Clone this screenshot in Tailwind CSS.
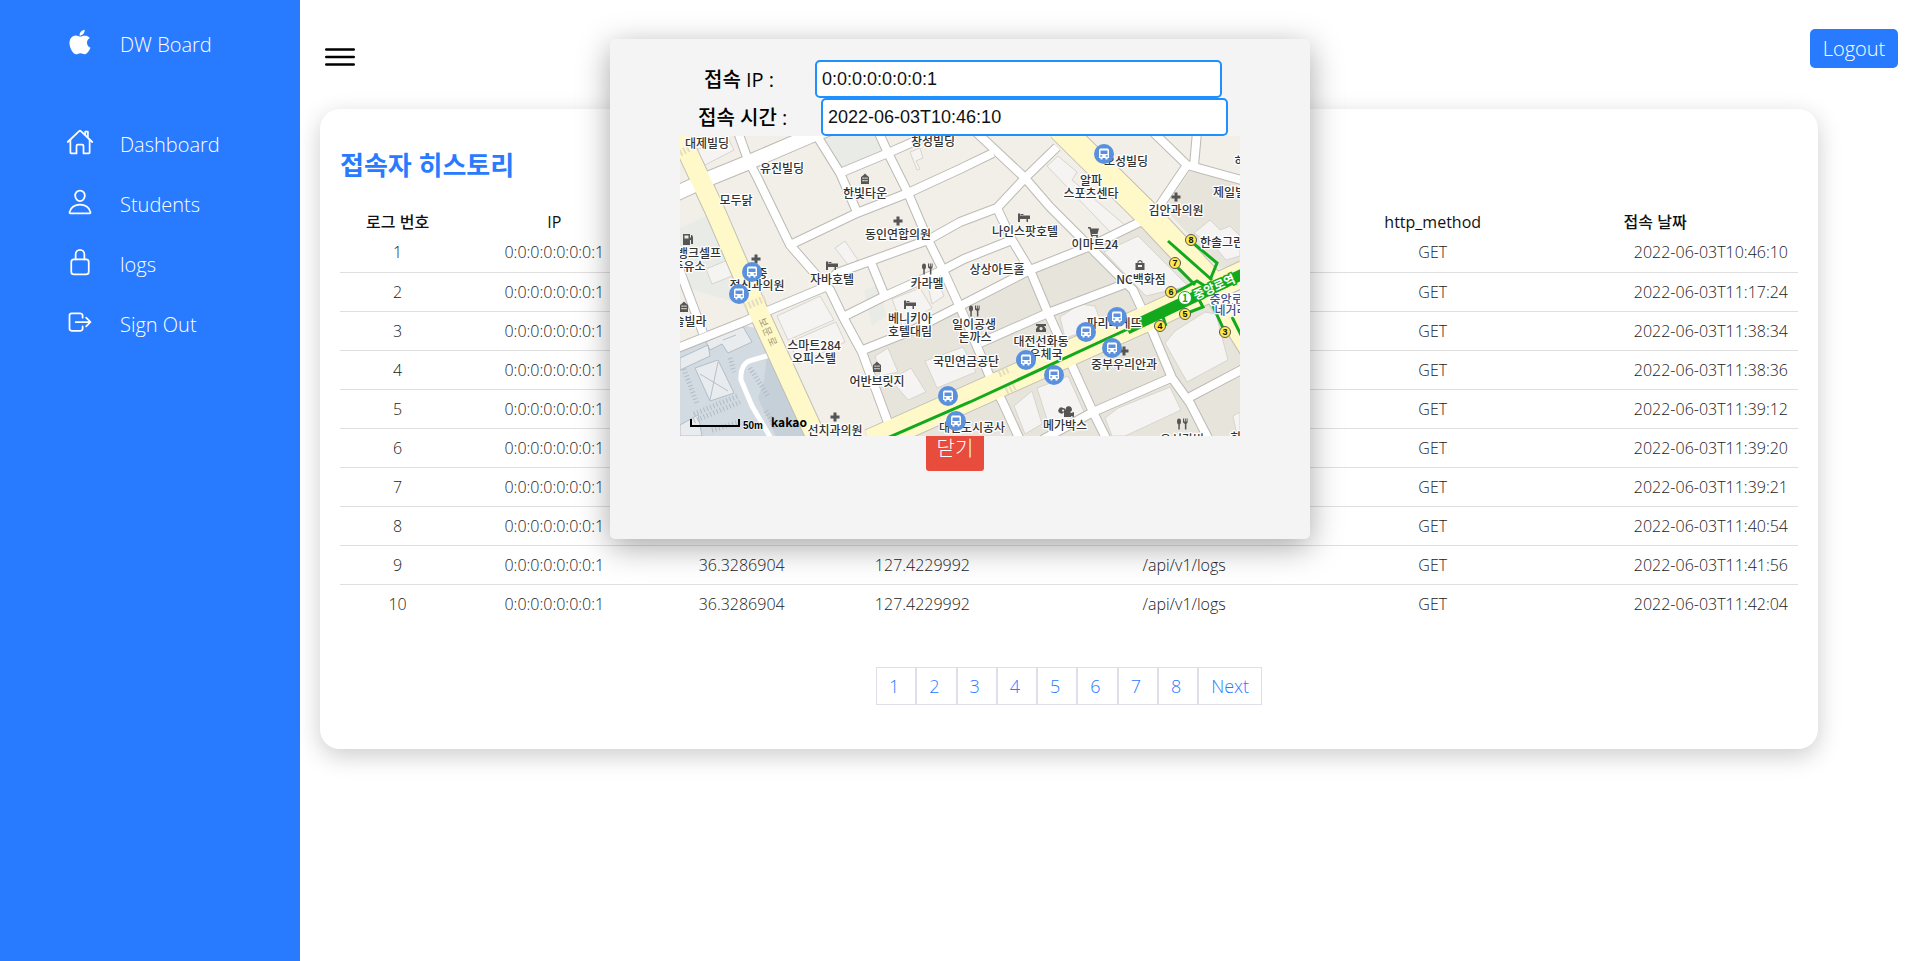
<!DOCTYPE html>
<html lang="ko">
<head>
<meta charset="utf-8">
<title>DW Board</title>
<script src="https://cdn.jsdelivr.net/npm/@tailwindcss/browser@4"></script>
</head>
<body class="min-h-screen bg-white font-['Open_Sans','Noto_Sans_CJK_KR',sans-serif] text-[#222]">
<div class="flex min-h-screen">
  <nav class="w-[300px] shrink-0 bg-[#287bff] pt-3 text-xl font-light text-white">
    <a href="#" class="mb-10 flex h-15 items-center gap-[26px] pl-[66px]">
      <svg class="size-7" viewBox="0 0 512 512" fill="currentColor"><path d="M349.13 136.86c-40.32 0-57.36 19.24-85.44 19.24-28.79 0-50.75-19.1-85.69-19.1-34.2 0-70.67 20.88-93.83 56.45-32.52 50.16-27 144.63 25.67 225.11 18.84 28.81 44 61.12 77 61.47h.6c28.68 0 37.2-18.78 76.67-19h.6c38.88 0 46.68 18.89 75.24 18.89h.6c33-.35 59.51-36.15 78.35-64.85 13.56-20.64 18.6-31 29-54.35-76.19-28.92-88.43-136.93-13.08-178.34-23-28.8-55.32-45.48-85.79-45.48z"/><path d="M340.25 32c-24 1.63-52 16.91-68.4 36.86-14.88 18.08-27.12 44.9-22.32 70.91h1.92c25.56 0 51.72-15.39 67-35.11 14.72-18.77 25.88-45.37 21.8-72.66z"/></svg>
      <span class="pt-1.5">DW Board</span>
    </a>
    <ul>
      <li><a href="#" class="flex h-15 items-center gap-[26px] pl-[66px]">
        <svg class="size-7" viewBox="0 0 512 512" fill="none" stroke="currentColor" stroke-width="32" stroke-linecap="round" stroke-linejoin="round"><path d="M80 212v236a16 16 0 0016 16h96V328a24 24 0 0124-24h80a24 24 0 0124 24v136h96a16 16 0 0016-16V212"/><path d="M480 256L266.89 52c-5-5.28-16.69-5.34-21.78 0L32 256M400 179V64h-48v69"/></svg>
        <span class="pt-1.5">Dashboard</span></a></li>
      <li><a href="#" class="flex h-15 items-center gap-[26px] pl-[66px]">
        <svg class="size-7" viewBox="0 0 512 512" fill="none" stroke="currentColor" stroke-width="32" stroke-linecap="round" stroke-linejoin="round"><path d="M344 144c-3.92 52.87-44 96-88 96s-84.15-43.12-88-96c-4-55 35-96 88-96s92 42 88 96z"/><path d="M256 304c-87 0-175.3 48-191.64 138.6C62.39 453.52 68.57 464 80 464h352c11.44 0 17.62-10.48 15.65-21.4C431.3 352 343 304 256 304z"/></svg>
        <span class="pt-1.5">Students</span></a></li>
      <li><a href="#" class="flex h-15 items-center gap-[26px] pl-[66px]">
        <svg class="size-7" viewBox="0 0 512 512" fill="none" stroke="currentColor" stroke-width="32" stroke-linecap="round" stroke-linejoin="round"><path d="M336 208v-95a80 80 0 00-160 0v95"/><rect x="96" y="208" width="320" height="272" rx="48"/></svg>
        <span class="pt-1.5">logs</span></a></li>
      <li><a href="#" class="flex h-15 items-center gap-[26px] pl-[66px]">
        <svg class="size-7" viewBox="0 0 512 512" fill="none" stroke="currentColor" stroke-width="32" stroke-linecap="round" stroke-linejoin="round"><path d="M304 336v40a40 40 0 01-40 40H104a40 40 0 01-40-40V136a40 40 0 0140-40h152c22.09 0 48 17.91 48 40v40M368 336l80-80-80-80M176 256h256"/></svg>
        <span class="pt-1.5">Sign Out</span></a></li>
    </ul>
  </nav>

  <main class="min-w-0 flex-1">
    <header class="flex h-[109px] items-start justify-between pl-5 pr-[22px] pt-[29px]">
      <button type="button" aria-label="메뉴" class="mt-2 text-black">
        <svg class="size-10" viewBox="0 0 512 512" fill="none" stroke="currentColor" stroke-width="32" stroke-linecap="round"><path d="M80 160h352M80 256h352M80 352h352"/></svg>
      </button>
      <a href="#" class="flex h-[39px] w-[88px] items-center justify-center rounded-[5px] bg-[#287bff] text-xl font-light text-white">Logout</a>
    </header>

    <section class="ml-5 mr-[102px] rounded-[20px] bg-white px-5 pb-11 pt-[37px] shadow-[0_7px_25px_rgba(0,0,0,0.2)]">
      <h2 class="text-[26px] leading-[38px] font-bold text-[#287bff]">접속자 히스토리</h2>
      <table class="mt-[22px] w-full table-fixed text-center text-base">
        <colgroup><col class="w-[7.9%]"><col class="w-[13.6%]"><col class="w-[12.1%]"><col class="w-[12.7%]"><col class="w-[23.2%]"><col class="w-[10.9%]"><col class="w-[19.6%]"></colgroup>
        <thead><tr class="h-[27px] align-bottom leading-[22px] text-[#111]"><th class="font-medium">로그 번호</th><th class="font-medium">IP</th><th class="font-medium">위도</th><th class="font-medium">경도</th><th class="font-medium">url</th><th class="font-medium">http_method</th><th class="font-medium">접속 날짜</th></tr></thead>
        <tbody id="logs" class="font-light"></tbody>
      </table>
      <nav aria-label="페이지" class="mt-11 flex justify-center text-lg font-light text-[#287bff]" id="pages"></nav>
    </section>
  </main>
</div>

<div role="dialog" aria-label="접속 위치" class="absolute left-1/2 top-[39px] flex h-[500px] w-[700px] -translate-x-1/2 flex-col items-center rounded-[5px] bg-[#f4f4f4] pt-[21px] shadow-[0_8px_32px_rgba(0,0,0,0.35)]">
  <div class="flex pl-1.5 text-xl text-black">
    <label for="ip" class="w-[111px] pt-1.5 font-medium">접속 IP :</label>
    <input id="ip" value="0:0:0:0:0:0:0:1" class="h-[38px] w-[407px] rounded-[5px] border-2 border-[#1e90ff] bg-white px-[5px] font-['Liberation_Sans',sans-serif] text-lg text-[#111] outline-none">
  </div>
  <div class="flex pl-1.5 text-xl text-black">
    <label for="time" class="w-[123px] pt-1.5 font-medium">접속 시간 :</label>
    <input id="time" value="2022-06-03T10:46:10" class="h-[38px] w-[407px] rounded-[5px] border-2 border-[#1e90ff] bg-white px-[5px] font-['Liberation_Sans',sans-serif] text-lg text-[#111] outline-none">
  </div>
  <svg class="relative z-10 block h-[300px] w-[560px] font-['Noto_Sans_CJK_KR',sans-serif]" viewBox="0 0 560 300" role="img" aria-label="지도">
    <defs>
      <g id="bus"><circle r="10" fill="#5b90dd"/><path fill="#fff" fill-rule="evenodd" d="M-4-5.500h8l1 1.500v8h-1.500v1.500h-2v-1.500h-3v1.500h-2v-1.500H-5v-8zM-3.500-3.500v3.500h7v-3.500zM-3.800 1.300v1.500h2v-1.500zM1.800 1.300v1.500h2v-1.500z"/></g>
      <path id="cross" fill="#555" d="M-1.500-4.500h3v3h3v3h-3v3h-3v-3h-3v-3h3z"/>
      <path id="bed" fill="#555" d="M-6-4.500h2v2l10 0v3.500h-2v3h-1.500v-3h-6.500v3h-2zM-3.500-4h3v1h-3z"/>
      <g id="fork" fill="#555"><ellipse cx="-3" cy="-2.500" rx="2" ry="3"/><path d="M-3.700 0h1.500v5.500h-1.500zM1-5.500h1v3h.8v-3h1v3h.8v-3h1v4l-1.200 1.500v5.500h-1.500v-5.500L1-1.500z"/></g>
      <path id="tower" fill="#555" fill-rule="evenodd" d="M-4 5v-7l2-1.500L0-5.500l2 2L4-2v7zM-2.600-1.500v1.300h1.400v-1.300zM-.6-1.500v1.300h1.300v-1.300zM1.300-1.500v1.300h1.300v-1.300zM-2.600 1v1.300h1.400V1zM-.6 1v1.300h1.300V1zM1.300 1v1.300h1.300V1z"/>
      <g id="roads" fill="none" stroke-linejoin="round">
        <path d="M58-4L68 24 77 41 110 109 138 141 150 154 163 181 182 216 210 292"/>
        <path d="M137 0L160 37 177 76M198-5L208 17 228 57 248 104 263 134 278 167 287 187 310 241 323 267 340 304"/>
        <path d="M160 37L208 17 256-4M110 109L177 77 228 57 280 33 313 17"/>
        <path d="M143 151L157 137 193 124 248 104 280 86 317 72 345 42 377 11M-5 213L63 186 90 174 150 149"/>
        <path d="M190 124L204 158M163 181L203 161 263 134 284 123 332 104M317 72L332 104 350 134 368 177 393 232 413 276 427 304"/>
        <path d="M296-4L345 42 370 71 413 114 453 154 473 197 492 242 510 267 529 304"/>
        <path d="M183 214L233 194 280 170 350 134 413 109 460 86M300 207L368 177 450 146"/>
        <path d="M473-4L507 29 565 45M517-4L514 30M507 29L480 69M510 261L565 232M362 304L413 276 493 241"/>
        <path d="M-2 130L23 197"/>
      </g>
      <path id="main" fill="none" stroke-linejoin="round" d="M-5 58L30 42 67 27 130 0 160-12"/>
      <g id="avenue" fill="none"><path stroke-linecap="butt" d="M380-8L466 77 530 145 580 225M190 306L280 266 470 181 565 137"/></g>
    </defs>
    <rect width="560" height="300" fill="#f2efe9"/>
    <path fill="#e7e4dc" d="M183 216L280 172 350 136 457 88 560 190V300H210zM510 35L560 48V130L540 132 484 72z"/>
    <path fill="#e9ebe7" d="M142 0H198L207 15 162 35zM0 92L30 78 68 170 0 150zM184 154L200 148 206 180 192 190z"/>
    <path fill="#d2dae2" d="M0 216L66 190 76 192 126 300H0z"/>
    <path fill="#c6d0d8" d="M87 219L97 228 126 300H96L78 262 84 245z"/>
    <g fill="#f5f4f2" stroke="#d8d5cf" stroke-width="1">
      <path d="M97 180L140 160 154 184 108 204zM110 206L156 186 165 206 118 228z"/>
      <path d="M155 112L165 105 178 124 168 129zM230 16L240 12 243 22 236 25 240 33 237 34z"/>
      <path d="M16 14L48 2 54 14 25 29zM26 133L48 124 52 140 32 148z"/>
      <path d="M367 30L378 20 397 36 392 44 446 90 433 99z"/>
      <path d="M424 116L458 100 508 150 466 160z"/>
      <path d="M211 244L231 232 246 256 228 264zM245 225L283 211 296 236 257 252zM195 220L208 212 218 236 200 240z"/>
      <path d="M212 163L240 152 252 172 222 190zM246 140L256 140 264 160 252 168z"/>
      <path d="M380 181L400 168 415 170 422 190 385 202zM334 270L352 255 362 288 345 298z"/>
      <path d="M357 252L388 240 405 278 370 293zM425 282L438 272 490 251 501 274 445 300H432z"/>
      <path d="M485 207L495 195 525 176 536 178 548 224 507 246zM553 280L560 276V295H556z"/>
      <path d="M514 97L530 84 540 94 550 90 560 100V120L546 124 536 112z"/>
    </g>
    <g fill="#e8ecef" stroke="#aab4bd" stroke-width=".8">
      <path d="M26 206L62 189 72 206 48 217 42 208 30 214zM0 222L28 209 30 220 0 234zM15 232L38 224 54 257 30 265zM0 289L18 279 22 300H0z"/>
      <path fill="none" d="M43 204L56 199M20 238L48 255M38 226L30 264"/>
    </g>
    <g fill="none" stroke="#b2bac3" stroke-width="5" stroke-dasharray="1 2.500">
      <path d="M4 233L17 268M14 285L60 266M14 278L58 260M70 232L88 260M50 222L54 236M86 275L96 292M32 294L60 286"/>
    </g>
    <path fill="none" stroke="#fff" stroke-width="5" d="M90 219L69 225Q60 229 61 244L72 270 92 304"/>
    <use href="#roads" stroke="#bdbab5" stroke-width="10"/>
    <use href="#main" stroke="#bdbab5" stroke-width="16"/>
    <path fill="none" stroke="#c2bfb4" stroke-width="21" d="M-5-11L36 77 79 177 140 310"/>
    <use href="#avenue" stroke="#c2bfb4" stroke-width="27"/>
    <use href="#roads" stroke="#fff" stroke-width="8"/>
    <use href="#main" stroke="#fff" stroke-width="14"/>
    <path fill="none" stroke="#fff9c9" stroke-width="19" d="M-5-11L36 77 79 177 140 310"/>
    <use href="#avenue" stroke="#fff9c9" stroke-width="25"/>
    <g fill="none" stroke="#e4dec0" stroke-width="7" stroke-dasharray="2 2"><path d="M65 171L86 162M0 17L14 10M319 238L330 233M326 255L336 250"/></g>

    <g fill="none" stroke="#12a91c" stroke-width="3">
      <path d="M205 303L290 266 450 192"/>
      <path stroke-width="11" d="M447 193L565 137"/>
      <path d="M488 105L532 144M513 107L537 127 530 144M497 131L515 149M495 157L517 145 525 150M510 176L523 171 517 160M486 190L482 178M543 192L533 170M562 201L552 181"/>
    </g>
    <g fill="#555">
      <use href="#tower" x="185" y="43"/><use href="#tower" x="4" y="171"/><use href="#tower" x="197" y="231"/>
      <use href="#cross" x="218" y="85"/><use href="#cross" x="76" y="123"/><use href="#cross" x="496" y="61"/><use href="#cross" x="155" y="281"/><use href="#cross" x="444" y="215"/>
      <use href="#bed" x="152" y="130"/><use href="#bed" x="344" y="82"/><use href="#bed" x="230" y="169"/>
      <use href="#fork" x="247" y="133"/><use href="#fork" x="294" y="175"/><use href="#fork" x="502" y="288"/>
      <path fill-rule="evenodd" d="M3 109V98h7v4l1-1v-2h1l1 2v7h-2v-4h-1v5zM4.500 99.500v3h4v-3z"/>
      <path d="M408 91h2.500l.6 1.500H419l-1.500 5.500h-5.500l.3 1H418v1h-7l-1.500-7.500H408z"/><circle cx="412" cy="101" r="1"/><circle cx="417" cy="101" r="1"/>
      <path fill-rule="evenodd" d="M455.500 134v-7h2v-1.500q2.500-3 5 0v1.500h2v7zM458.500 127h3v-1q-1.500-1.500-3 0zM458 129v2h4v-2z"/>
      <path fill-rule="evenodd" d="M356 188h10v2h-2l2 3v3h-10v-3l2-3h-2zM361 191a1.600 1.600 0 10.1 0z"/>
      <path fill-rule="evenodd" d="M383 272a3 3 0 013 2 3 3 0 114 2l1 1 3-1v5l-3-1v1h-7v-5a3 3 0 11-1-4zM383 273.500a1 1 0 10.1 0z"/>
    </g>

    <g font-size="12" font-weight="500" text-anchor="middle" fill="#333" stroke="#fff" stroke-width="2.500" stroke-linejoin="round" paint-order="stroke">
      <text x="27" y="12">대제빌딩</text><text x="253" y="10">창성빌딩</text><text x="102" y="37">유진빌딩</text>
      <text x="185" y="62">한빛타운</text><text x="56" y="69">모두닭</text><text x="218" y="103">동인연합의원</text>
      <text x="19" y="122">뱅크셀프</text><text x="9" y="135">주유소</text><text x="82" y="142">중</text><text x="77" y="154">정신과의원</text>
      <text x="152" y="148">자바호텔</text><text x="247" y="152">카라멜</text>
      <text x="446" y="30">오성빌딩</text><text x="411" y="49">알파</text><text x="411" y="62">스포츠센타</text>
      <text x="496" y="79">김안과의원</text><text x="345" y="100">나인스팟호텔</text><text x="415" y="113">이마트24</text>
      <text x="555" y="61">제일빌딩</text><text x="560" y="30">하</text><text x="542" y="111">한솔그린</text>
      <text x="317" y="138">상상아트홀</text><text x="461" y="148">NC백화점</text>
      <text x="10" y="190">솔빌라</text><text x="134" y="214">스마트284</text><text x="134" y="227">오피스텔</text>
      <text x="230" y="187">베니키아</text><text x="230" y="200">호텔대림</text><text x="197" y="250">어반브릿지</text>
      <text x="155" y="299">선치과의원</text><text x="286" y="230">국민연금공단</text><text x="294" y="193">일이공생</text><text x="295" y="206">돈까스</text>
      <text x="292" y="296">대전도시공사</text><text x="361" y="210">대전선화동</text><text x="366" y="223">우체국</text>
      <text x="434" y="192">파리바게뜨</text><text x="444" y="233">중부우리안과</text><text x="385" y="294">메가박스</text>
      <text x="502" y="308">유성갈비</text><text x="556" y="306">하</text>
      <g fill="#44508c"><text x="546" y="168">중앙로</text><text x="551" y="179">네거리</text></g>
    </g>
    <g font-size="10" text-anchor="middle" fill="#a39a70"><text transform="translate(80 188) rotate(66)">보</text><text transform="translate(84 197) rotate(66)">문</text><text transform="translate(89 207) rotate(66)">로</text></g>
    <text transform="translate(536 155) rotate(-24)" text-anchor="middle" font-size="12" font-weight="700" fill="#fff" stroke="#12a91c" stroke-width="3" paint-order="stroke">중앙로역</text>
    <circle cx="505" cy="162" r="6.500" fill="#fff" stroke="#12a91c"/><text x="505" y="166" text-anchor="middle" font-size="10" font-weight="700" fill="#12a91c">1</text>

    <use href="#bus" x="72" y="136"/><use href="#bus" x="59" y="158"/><use href="#bus" x="424" y="18"/><use href="#bus" x="268" y="260"/><use href="#bus" x="276" y="285"/>
    <use href="#bus" x="437" y="181"/><use href="#bus" x="406" y="196"/><use href="#bus" x="432" y="212"/><use href="#bus" x="346" y="224"/><use href="#bus" x="374" y="239"/>
    <g fill="#ffe94a" stroke="#555"><circle cx="511" cy="104" r="5.500"/><circle cx="495" cy="127" r="5.500"/><circle cx="491" cy="156" r="5.500"/><circle cx="505" cy="178" r="5.500"/><circle cx="480" cy="190" r="5.500"/><circle cx="545" cy="196" r="5.500"/></g>
    <g font-size="9" font-weight="700" text-anchor="middle" fill="#111" font-family="Liberation Sans"><text x="511" y="107">8</text><text x="495" y="130">7</text><text x="491" y="159">6</text><text x="505" y="181">5</text><text x="480" y="193">4</text><text x="545" y="199">3</text></g>
    <path fill="none" stroke="#000" stroke-width="2" d="M11 283v7h48v-7"/>
    <text x="63" y="293" font-size="10" font-weight="700" font-family="Liberation Sans" stroke="#fff" stroke-width="1" paint-order="stroke">50m</text>
    <text x="91" y="291" font-size="12" font-weight="700" font-family="Noto Sans CJK KR">kakao</text>
  </svg>
  <button type="button" class="-mt-1 mr-2.5 h-[39px] w-[58px] rounded-[3px] bg-[#e74c3c] pb-1.5 text-xl font-light text-white">닫기</button>
</div>

<script>
const times = ['10:46:10','11:17:24','11:38:34','11:38:36','11:39:12','11:39:20','11:39:21','11:40:54','11:41:56','11:42:04'];
document.getElementById('logs').innerHTML = times.map((t, i) =>
  `<tr class="h-[39px] border-b border-[#dfdfdf] last:border-b-0"><td>${i + 1}</td><td>0:0:0:0:0:0:0:1</td><td>36.3286904</td><td>127.4229992</td><td>/api/v1/logs</td><td>GET</td><td class="pr-2.5 text-right">2022-06-03T${t}</td></tr>`).join('');
document.getElementById('pages').innerHTML = ['1','2','3','4','5','6','7','8','Next'].map(p =>
  `<a href="#" class="flex h-[38px] items-center border border-[#dddfeb] pl-3 pr-4 last:pr-3">${p}</a>`).join('');
</script>
</body>
</html>
